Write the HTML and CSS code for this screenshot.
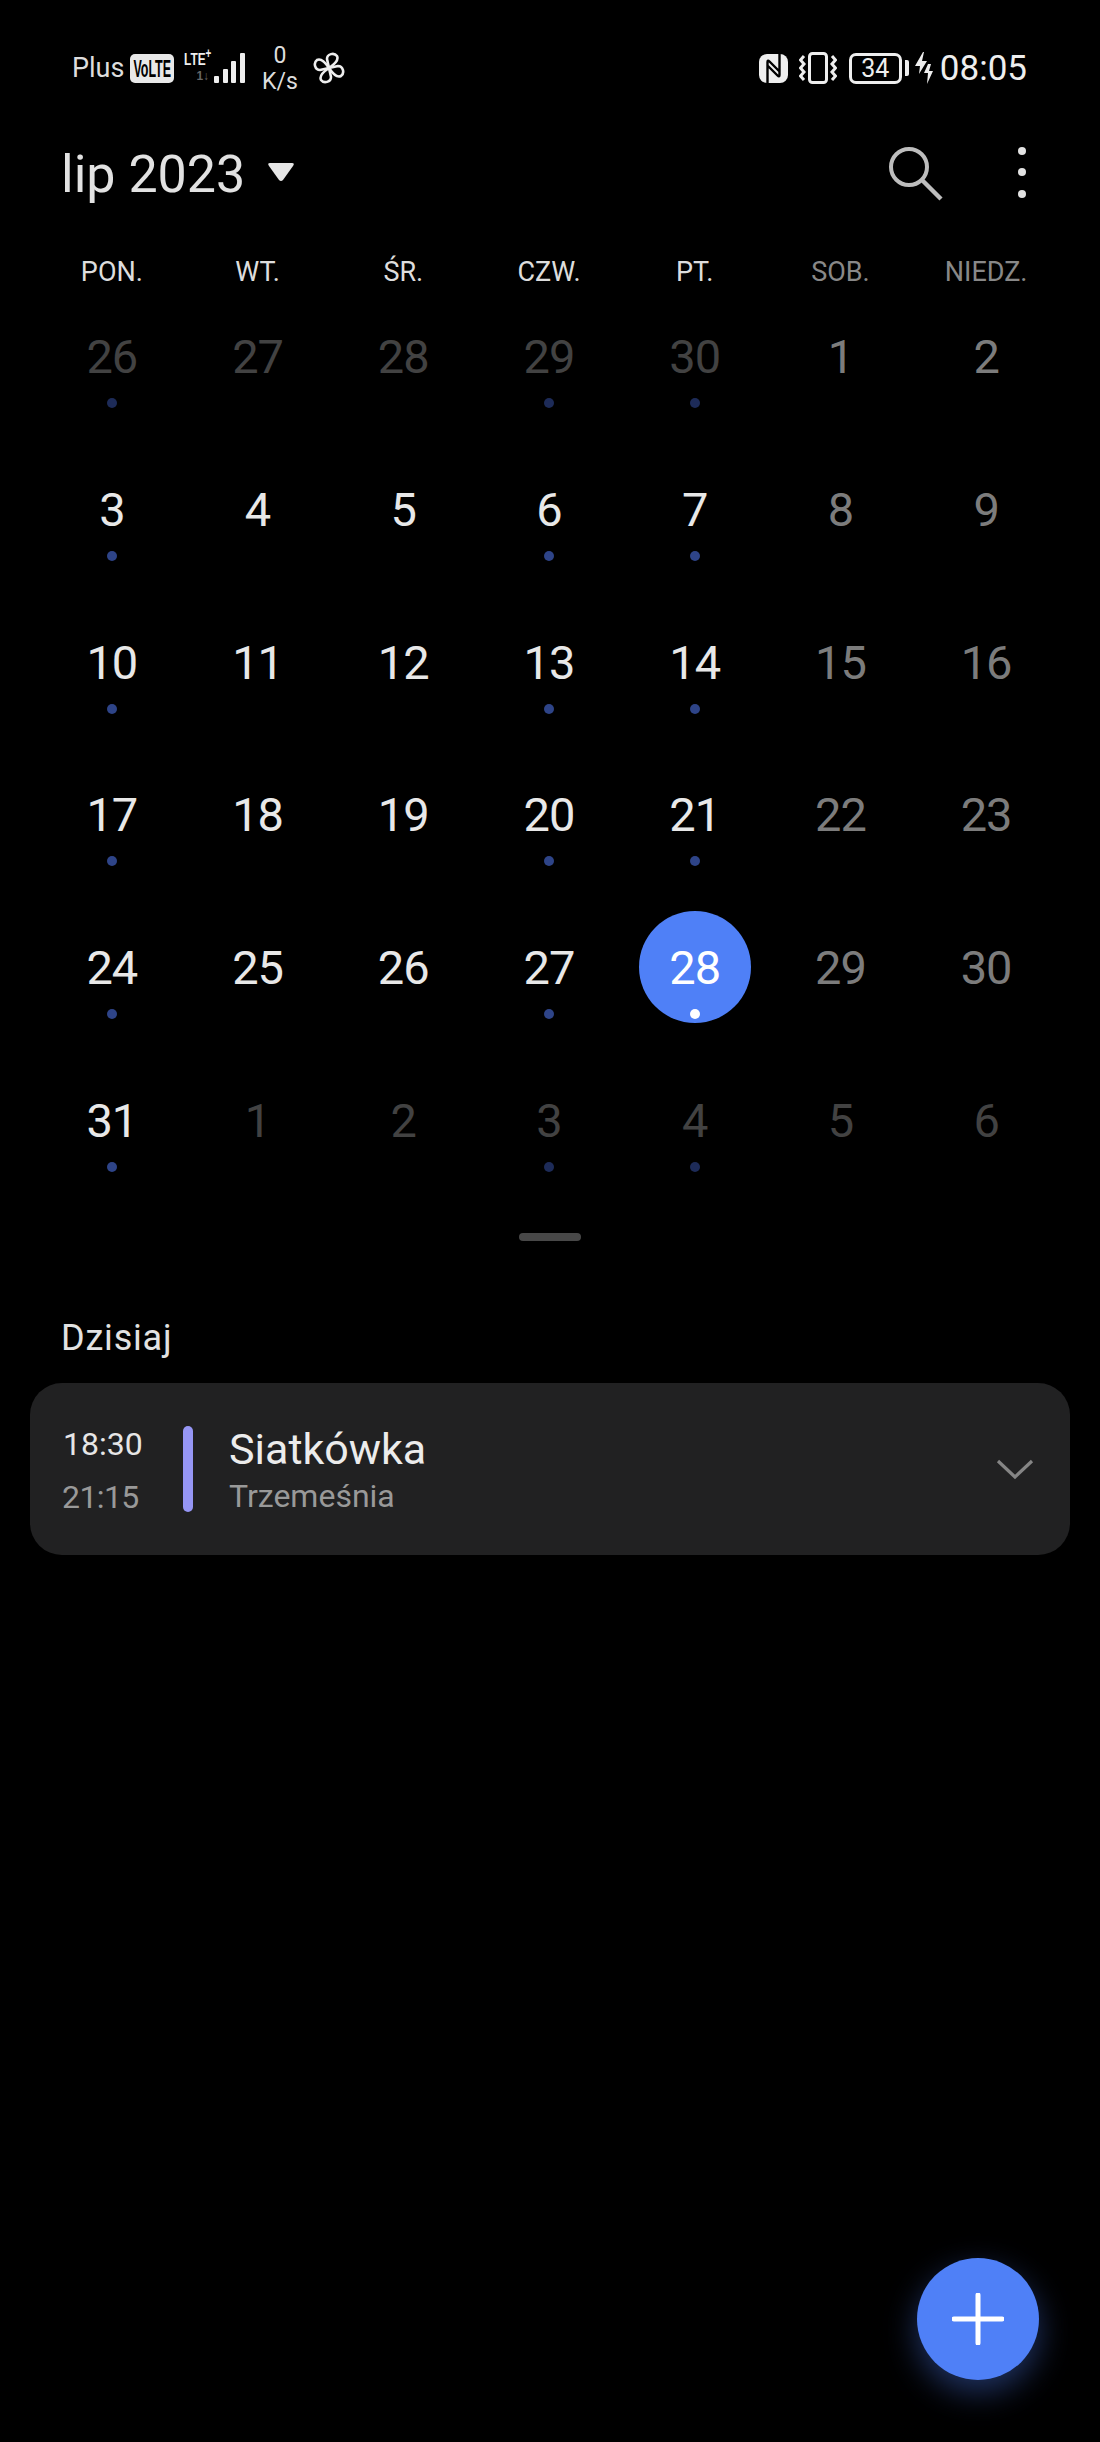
FILE: index.html
```html
<!DOCTYPE html>
<html lang="pl">
<head>
  <meta charset="UTF-8">
  <meta name="viewport" content="width=device-width, initial-scale=1.0">
  <title>Kalendarz</title>
  <link rel="stylesheet" href="styles.css">
</head>
<body>
  <header class="status">
    <div class="status-left">
      <span class="carrier">Plus</span>
      <div class="volte"><span>VoLTE</span></div>
      <div class="network">
        <span class="lte">LTE<sup>+</sup></span>
        <span class="sim">1↓</span>
      </div>
      <div class="signal">
        <i class="bar-1"></i><i class="bar-2"></i><i class="bar-3"></i><i class="bar-4"></i>
      </div>
      <div class="speed"><span>0</span><span>K/s</span></div>
      <svg class="fan" width="32" height="32" viewBox="-16 -16 32 32">
        <g fill="none" stroke="#eee" stroke-width="2.6" stroke-linejoin="round">
          <path d="M0 0L-2-9C-2-14 5-16 8-12C10-8 6-4 0 0Z"/>
          <path d="M0 0L-2-9C-2-14 5-16 8-12C10-8 6-4 0 0Z" transform="rotate(90)"/>
          <path d="M0 0L-2-9C-2-14 5-16 8-12C10-8 6-4 0 0Z" transform="rotate(180)"/>
          <path d="M0 0L-2-9C-2-14 5-16 8-12C10-8 6-4 0 0Z" transform="rotate(270)"/>
        </g>
      </svg>
    </div>
    <div class="status-right">
      <svg class="nfc" width="29" height="29" viewBox="0 0 29 29">
        <rect width="29" height="29" rx="8" fill="#eee"/>
        <path d="M8.500 29V8Q8.500 5.500 10.500 7.500L21 18M20.500 0V21Q20.500 23.500 18.500 21.500L8 11" fill="none" stroke="#000" stroke-width="2.400"/>
      </svg>
      <svg class="vibrate" width="38" height="32" viewBox="0 0 38 32">
        <rect x="10.500" y="1.500" width="17" height="29" rx="3" fill="none" stroke="#eee" stroke-width="3"/>
        <path d="M5 4L1.500 8L5 12L1.500 16L5 20L1.500 24L5 28M33 4L36.500 8L33 12L36.500 16L33 20L36.500 24L33 28" fill="none" stroke="#eee" stroke-width="3"/>
      </svg>
      <div class="battery"><span>34</span></div>
      <i class="battery-tip"></i>
      <svg class="bolt" width="18" height="32" viewBox="0 0 18 32">
        <path d="M8 0L0 14H5L4 22L12 9H7L9 0ZM13 12L9 21H13L12 32L18 19H14L16 12Z" fill="#eee"/>
      </svg>
      <span class="clock">08:05</span>
    </div>
  </header>

  <div class="topbar">
    <div class="month">
      <span>lip 2023</span>
      <svg width="28" height="21" viewBox="0 0 28 21"><path d="M3 1H25Q28 1 26 4L16 18Q14 20 12 18L2 4Q0 1 3 1Z" fill="#e6e6e6"/></svg>
    </div>
    <div class="actions">
      <svg class="search" width="56" height="56" viewBox="0 0 56 56">
        <circle cx="22" cy="22" r="18" fill="none" stroke="#bdbdbd" stroke-width="4"/>
        <path d="M35 35L54 54" stroke="#bdbdbd" stroke-width="4.500"/>
      </svg>
      <div class="more"><i></i><i></i><i></i></div>
    </div>
  </div>

  <div class="weekdays">
    <span>PON.</span><span>WT.</span><span>ŚR.</span><span>CZW.</span><span>PT.</span><span class="weekend">SOB.</span><span class="weekend">NIEDZ.</span>
  </div>

  <div class="days">
    <div class="day other event"><b>26</b><i></i></div>
    <div class="day other"><b>27</b><i></i></div>
    <div class="day other"><b>28</b><i></i></div>
    <div class="day other event"><b>29</b><i></i></div>
    <div class="day other event"><b>30</b><i></i></div>
    <div class="day free"><b>1</b><i></i></div>
    <div class="day free"><b>2</b><i></i></div>

    <div class="day event"><b>3</b><i></i></div>
    <div class="day"><b>4</b><i></i></div>
    <div class="day"><b>5</b><i></i></div>
    <div class="day event"><b>6</b><i></i></div>
    <div class="day event"><b>7</b><i></i></div>
    <div class="day free"><b>8</b><i></i></div>
    <div class="day free"><b>9</b><i></i></div>

    <div class="day event"><b>10</b><i></i></div>
    <div class="day"><b>11</b><i></i></div>
    <div class="day"><b>12</b><i></i></div>
    <div class="day event"><b>13</b><i></i></div>
    <div class="day event"><b>14</b><i></i></div>
    <div class="day free"><b>15</b><i></i></div>
    <div class="day free"><b>16</b><i></i></div>

    <div class="day event"><b>17</b><i></i></div>
    <div class="day"><b>18</b><i></i></div>
    <div class="day"><b>19</b><i></i></div>
    <div class="day event"><b>20</b><i></i></div>
    <div class="day event"><b>21</b><i></i></div>
    <div class="day free"><b>22</b><i></i></div>
    <div class="day free"><b>23</b><i></i></div>

    <div class="day event"><b>24</b><i></i></div>
    <div class="day"><b>25</b><i></i></div>
    <div class="day"><b>26</b><i></i></div>
    <div class="day event"><b>27</b><i></i></div>
    <div class="day event today"><b>28</b><i></i></div>
    <div class="day free"><b>29</b><i></i></div>
    <div class="day free"><b>30</b><i></i></div>

    <div class="day event"><b>31</b><i></i></div>
    <div class="day other"><b>1</b><i></i></div>
    <div class="day other"><b>2</b><i></i></div>
    <div class="day other event"><b>3</b><i></i></div>
    <div class="day other event"><b>4</b><i></i></div>
    <div class="day other"><b>5</b><i></i></div>
    <div class="day other"><b>6</b><i></i></div>
  </div>

  <div class="handle"></div>

  <h2 class="section-title">Dzisiaj</h2>

  <div class="card">
    <div class="times">
      <span class="start">18:30</span>
      <span class="end">21:15</span>
    </div>
    <i class="stripe"></i>
    <div class="info">
      <span class="name">Siatkówka</span>
      <span class="place">Trzemeśnia</span>
    </div>
    <svg class="chevron" width="38" height="21" viewBox="0 0 38 21">
      <path d="M2 2L19 18L36 2" fill="none" stroke="#858585" stroke-width="3.200"/>
    </svg>
  </div>

  <button class="fab">
    <svg width="52" height="52" viewBox="0 0 52 52">
      <path d="M26 2V50M2 26H50" stroke="#fff" stroke-width="5" stroke-linecap="round"/>
    </svg>
  </button>
</body>
</html>
```

FILE: styles.css
```css
html, body {
  margin: 0;
  height: 2442px;
  overflow: hidden;
  background: #000;
}
body {
  position: relative;
  font-family: Roboto, "Noto Sans", sans-serif;
  color: #e6e6e6;
}

/* status bar */
.status {
  height: 136px;
  padding: 0 73px 0 72px;
  box-sizing: border-box;
  display: flex;
  justify-content: space-between;
  align-items: center;
}
.status-left, .status-right {
  display: flex;
  align-items: center;
}
.carrier {
  font-size: 27px;
  color: #ddd;
}
.volte {
  margin-left: 6px;
  width: 44px;
  height: 29px;
  background: #e8e8e8;
  border-radius: 5px;
  display: flex;
  align-items: center;
  justify-content: center;
  overflow: hidden;
}
.volte span {
  flex: none;
  color: #000;
  font: bold 24px/29px "Liberation Sans", sans-serif;
  transform: scaleX(0.52);
}
.network {
  margin-left: 10px;
  width: 30px;
  height: 32px;
  display: flex;
  flex-direction: column;
}
.lte {
  font: bold 17px/15px "Liberation Sans", sans-serif;
  color: #eee;
  white-space: nowrap;
  transform: scaleX(0.7);
  transform-origin: left;
}
.lte sup {
  font-size: 14px;
  line-height: 0;
}
.sim {
  margin: 3px 0 0 12px;
  font: bold 12px/12px "Liberation Sans", sans-serif;
  color: #666;
}
.signal {
  display: flex;
  align-items: flex-end;
  gap: 3.500px;
  height: 30px;
}
.signal i {
  width: 5px;
  background: #eee;
  border-radius: 1px;
}
.bar-1 { height: 7px; }
.bar-2 { height: 14px; }
.bar-3 { height: 22px; }
.bar-4 { height: 30px; }
.speed {
  margin: 2px 0 0 17px;
  width: 36px;
  display: flex;
  flex-direction: column;
  align-items: center;
  font-size: 23px;
  line-height: 26px;
  color: #ddd;
}
.fan {
  margin-left: 15px;
}
.status-right svg {
  flex: none;
}
.vibrate {
  margin-left: 11px;
}
.battery {
  margin-left: 12px;
  width: 53px;
  height: 31px;
  box-sizing: border-box;
  border: 3px solid #eee;
  border-radius: 7px;
  display: flex;
  align-items: center;
  justify-content: center;
  font-size: 25px;
  color: #eee;
}
.battery-tip {
  margin-left: 3px;
  width: 4px;
  height: 16px;
  background: #eee;
  border-radius: 0 2px 2px 0;
}
.bolt {
  margin-left: 6px;
}
.clock {
  margin-left: 7px;
  font-size: 35px;
  color: #eee;
}

/* month header */
.topbar {
  height: 72px;
  padding: 0 74px 0 61px;
  display: flex;
  justify-content: space-between;
  align-items: center;
}
.month {
  display: flex;
  align-items: center;
  gap: 22px;
  font-size: 52px;
  color: #e2e2e2;
}
.month span {
  margin-top: 5px;
}
.actions {
  display: flex;
  align-items: center;
  gap: 75px;
}
.search {
  margin-top: 2px;
}
.more {
  display: flex;
  flex-direction: column;
  gap: 13.500px;
}
.more i {
  width: 8px;
  height: 8px;
  border-radius: 50%;
  background: #e2e2e2;
}

/* calendar */
.weekdays, .days {
  margin: 0 41px 0 39px;
  display: grid;
  grid-template-columns: repeat(7, 1fr);
}
.weekdays {
  margin-top: 52px;
  height: 21px;
  font-size: 27px;
  line-height: 24px;
  text-align: center;
  color: #ddd;
}
.weekdays .weekend {
  color: #888;
}
.days {
  grid-auto-rows: 152.8px;
}
.day {
  position: relative;
  padding-top: 48px;
  box-sizing: border-box;
  display: flex;
  flex-direction: column;
  align-items: center;
  color: #e8e8e8;
}
.day b {
  position: relative;
  font-size: 47px;
  font-weight: 400;
  line-height: 56px;
  letter-spacing: -1px;
}
.day i {
  position: relative;
  margin-top: 13px;
  width: 10px;
  height: 10px;
  border-radius: 50%;
}
.day.event i {
  background: #2e4488;
}
.day.free {
  color: #7c7c7c;
}
.day.other {
  color: #424242;
}
.day.other.event i {
  background: #1d2b58;
}
.day.today {
  color: #fff;
}
.day.today::before {
  content: "";
  position: absolute;
  left: 50%;
  top: 18.500px;
  width: 112px;
  height: 112px;
  margin-left: -56px;
  border-radius: 50%;
  background: #4f80f7;
}
.day.today i {
  background: #fff;
}

.handle {
  margin: 35px auto 0;
  width: 62px;
  height: 8px;
  border-radius: 4px;
  background: #484848;
}

/* today's events */
.section-title {
  margin: 75px 0 0 61px;
  height: 44px;
  font-size: 36px;
  font-weight: 400;
  line-height: 44px;
  letter-spacing: 0.800px;
  color: #e2e2e2;
}
.card {
  margin: 23px 30px 0;
  height: 172px;
  padding: 0 36px 0 33px;
  box-sizing: border-box;
  background: #212122;
  border-radius: 32px;
  display: flex;
  align-items: center;
}
.times {
  margin-top: 4px;
  width: 120px;
  display: flex;
  flex-direction: column;
  gap: 15px;
  font-size: 32px;
  line-height: 38px;
}
.start {
  color: #e6e6e6;
}
.end {
  color: #999;
  margin-left: -1px;
  letter-spacing: -0.600px;
}
.stripe {
  width: 10px;
  height: 86px;
  border-radius: 5px;
  background: #9696f5;
}
.info {
  margin-left: 36px;
  flex: 1;
  display: flex;
  flex-direction: column;
}
.name {
  font-size: 43px;
  line-height: 52px;
  color: #ececec;
}
.place {
  margin-top: 2px;
  font-size: 32px;
  line-height: 38px;
  color: #999;
}
.chevron {
  margin-top: 2px;
}

.fab {
  position: absolute;
  left: 917px;
  top: 2258px;
  width: 122px;
  height: 122px;
  padding: 0;
  border: none;
  border-radius: 50%;
  background: #4f80f7;
  box-shadow: 0 12px 32px rgba(79, 128, 247, 0.4);
  display: flex;
  align-items: center;
  justify-content: center;
}
```
